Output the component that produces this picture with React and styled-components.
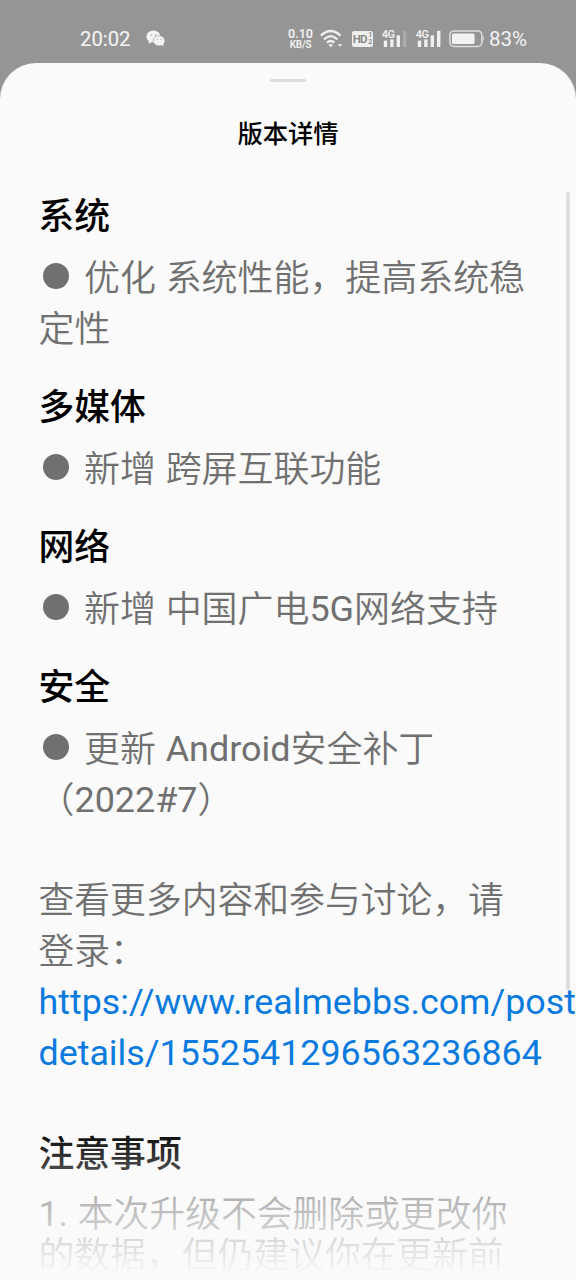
import React from 'react';
import styled, { createGlobalStyle } from 'styled-components';

const sections = [
  { title: '系统', lines: ['优化 系统性能，提高系统稳', '定性'] },
  { title: '多媒体', lines: ['新增 跨屏互联功能'] },
  { title: '网络', lines: ['新增 中国广电5G网络支持'] },
  { title: '安全', lines: ['更新 Android安全补丁', '（2022#7）'] },
];

// the body text is demilight, which roboto would render too thin
const splitLatin = (text) =>
  text.split(/([A-Za-z0-9#.]+)/).map((part, i) => (
    i % 2 === 1 ? <Latin key={i}>{part}</Latin> : part
  ));

function WechatIcon() {
  return (
    <svg width="20" height="18" viewBox="0 0 20 18">
      <ellipse cx="7.4" cy="6.6" rx="7" ry="6" fill="#f4f4f4" />
      <path d="M3 10.5 L2.4 14 L6 12z" fill="#f4f4f4" />
      <ellipse cx="13" cy="10.8" rx="5.9" ry="5.1" fill="#f4f4f4" stroke="#959595" strokeWidth="0.6" />
      <path d="M15.3 14.8 L17.6 16.6 L17.2 13.4z" fill="#f4f4f4" />
      <g fill="#a5a5a5">
        <circle cx="5" cy="5" r="0.8" />
        <circle cx="9.8" cy="5" r="0.8" />
        <circle cx="11.2" cy="9.6" r="0.7" />
        <circle cx="15" cy="9.6" r="0.7" />
      </g>
    </svg>
  );
}

function WifiIcon() {
  return (
    <svg width="24" height="20" viewBox="0 0 24 20">
      <g fill="none" stroke="#f0f0f0" strokeWidth="2.3">
        <path d="M0.9 6.7 Q10.7 -2.6 20.5 6.7" />
        <path d="M4 10.3 Q10.7 4 17.4 10.3" />
        <path d="M7 13.7 Q10.7 10.4 14.4 13.7" />
      </g>
      <path d="M8.4 15.8 Q10.7 14 13 15.8 L10.7 18.2z" fill="#f0f0f0" />
      <path d="M17.5 15.2h5l-2.5 2.6z" fill="#f0f0f0" />
    </svg>
  );
}

function SignalIcon({ weak }) {
  return (
    <svg width="26" height="20" viewBox="0 0 26 20">
      <g fill="#f0f0f0">
        <rect x="1.8" y="11.6" width="3.4" height="6.4" />
        <rect x="8.2" y="10.4" width="3.4" height="7.6" />
        <rect x="14.6" y="6.4" width="3.4" height="11.6" />
        <rect x="21" y="1.8" width="3.4" height="16.2" opacity={weak ? 0.25 : 1} />
      </g>
      <text x="-0.2" y="9.2" fill="#f0f0f0" fontFamily="Roboto, sans-serif" fontSize="11" fontWeight="600" letterSpacing="-0.7">4G</text>
    </svg>
  );
}

function BatteryIcon() {
  return (
    <svg width="36" height="18" viewBox="0 0 36 18">
      <rect x="0.9" y="0.9" width="32" height="15.6" rx="4.2" fill="none" stroke="#dedede" strokeWidth="1.5" />
      <rect x="3" y="3.4" width="22.6" height="10.6" rx="1.6" fill="#f2f2f2" />
      <path d="M33.8 5.6 Q36 8.7 33.8 11.8z" fill="#dedede" />
    </svg>
  );
}

function App() {
  return (
    <Screen>
      <GlobalStyle />

      <StatusBar>
        <Clock>20:02</Clock>
        <WechatIcon />
        <StatusIcons>
          <Speed>
            <SpeedValue>0.10</SpeedValue>
            <SpeedUnit>KB/S</SpeedUnit>
          </Speed>
          <WifiIcon />
          <HdBadge>
            HD
            <HdSims><span>1</span><span>2</span></HdSims>
          </HdBadge>
          <SignalIcon weak />
          <SignalIcon />
          <BatteryIcon />
        </StatusIcons>
        <Percent>83%</Percent>
      </StatusBar>

      <Sheet>
        <Handle />
        <SheetTitle>版本详情</SheetTitle>

        <Content>
          {sections.map((section) => (
            <Section key={section.title}>
              <Heading>{section.title}</Heading>
              {section.lines.map((line, i) => (
                <Line key={line} $size={35.95}>
                  {i === 0 && <Bullet />}
                  {splitLatin(line)}
                </Line>
              ))}
            </Section>
          ))}

          <More>
            <Line>查看更多内容和参与讨论，请</Line>
            <Line>登录：</Line>
            <Link href="#">
              https://www.realmebbs.com/post-
              <br />
              details/1552541296563236864
            </Link>
          </More>

          <Heading>注意事项</Heading>
          <Notes>
            <Line $height={41}>{splitLatin('1. 本次升级不会删除或更改你')}</Line>
            <Line $height={41}>的数据，但仍建议你在更新前</Line>
          </Notes>
        </Content>

        {/* overlays: scroll indicator and bottom fade */}
        <ScrollThumb />
        <Fade />
      </Sheet>
    </Screen>
  );
}

export default App;


const GlobalStyle = createGlobalStyle`
  body {
    margin: 0;
    background-color: #959595;
    font-family: Roboto, "Noto Sans CJK SC", sans-serif;
  }
`

const Screen = styled.div`
  display: flex;
  flex-direction: column;
  width: 576px;
  height: 1280px;
  overflow: hidden;
  background-color: #959595;
`

const StatusBar = styled.div`
  display: flex;
  align-items: center;
  flex-shrink: 0;
  box-sizing: border-box;
  height: 63px;
  padding: 14px 48px 0 80px;
  color: #f2f2f2;
`

const Clock = styled.div`
  width: 66px;
  font-size: 20.3px;
  line-height: 24px;
  -webkit-text-stroke: 0.15px #f2f2f2;
`

const StatusIcons = styled.div`
  display: flex;
  align-items: center;
  gap: 7.5px;
  margin-left: auto;
`

const Speed = styled.div`
  display: flex;
  flex-direction: column;
  align-items: center;
  width: 24px;
  font-weight: 600;
`

const SpeedValue = styled.span`
  font-size: 12.5px;
  line-height: 12px;
`

const SpeedUnit = styled.span`
  font-size: 10px;
  line-height: 10px;
  letter-spacing: -0.3px;
`

const HdBadge = styled.div`
  display: flex;
  align-items: center;
  justify-content: center;
  width: 21px;
  height: 16px;
  margin-right: 2px;
  border-radius: 2px;
  background-color: #eeeeee;
  color: #858585;
  font-size: 11.5px;
  font-weight: 600;
  letter-spacing: -0.8px;
`

const HdSims = styled.span`
  display: flex;
  flex-direction: column;
  margin-left: 1.5px;
  font-size: 7px;
  line-height: 6.5px;
`

const Percent = styled.div`
  width: 39px;
  margin-left: 4px;
  font-size: 20.5px;
  line-height: 24px;
`

const Sheet = styled.div`
  position: relative;
  display: flex;
  flex-direction: column;
  flex: 1;
  min-height: 0;
  overflow: hidden;
  border-radius: 36px 36px 0 0;
  background-color: #fafafa;
`

const Handle = styled.div`
  flex-shrink: 0;
  align-self: center;
  width: 36px;
  height: 3px;
  margin-top: 16px;
  border-radius: 2px;
  background-color: #dcdcdc;
`

const SheetTitle = styled.div`
  flex-shrink: 0;
  margin-top: 34px;
  color: #000000;
  font-size: 25.3px;
  font-weight: 500;
  line-height: 38px;
  text-align: center;
`

const Content = styled.div`
  display: flex;
  flex-direction: column;
  padding: 38px 0 0 38.5px;
  font-size: 35.8px;
  white-space: nowrap;
`

const Section = styled.div`
  margin-bottom: 27px;
`

const Heading = styled.div`
  margin-bottom: 11px;
  color: #000000;
  font-weight: 500;
  line-height: 51px;
`

const Line = styled.div`
  height: ${(props) => props.$height || 51}px;
  color: #707070;
  font-size: ${(props) => props.$size || 35.8}px;
  font-weight: 350;
  line-height: ${(props) => props.$height || 51}px;
  word-spacing: 1px;
`

const Latin = styled.span`
  position: relative;
  top: -1px;
  font-weight: 400;
`

const Bullet = styled.span`
  display: inline-block;
  width: 26px;
  height: 26px;
  margin: 0 15px 0 4.5px;
  border-radius: 50%;
  background-color: #707070;
  vertical-align: 2px;
`

const More = styled.div`
  margin: 22px 0 50px;
`

const Link = styled.a`
  display: block;
  margin-top: -1px;
  padding-bottom: 1px;
  color: #0b7ade;
  line-height: 51px;
  text-decoration: none;
`

const Notes = styled.div`
  margin-top: 3px;
`

const ScrollThumb = styled.div`
  position: absolute;
  top: 129px;
  right: 6px;
  width: 4px;
  height: 798px;
  border-radius: 2px;
  background-color: #dedede;
`

const Fade = styled.div`
  position: absolute;
  right: 0;
  bottom: 0;
  left: 0;
  height: 154px;
  background: linear-gradient(rgba(250, 250, 250, 0), rgba(250, 250, 250, 0.58) 56%, #fafafa 97%);
`
